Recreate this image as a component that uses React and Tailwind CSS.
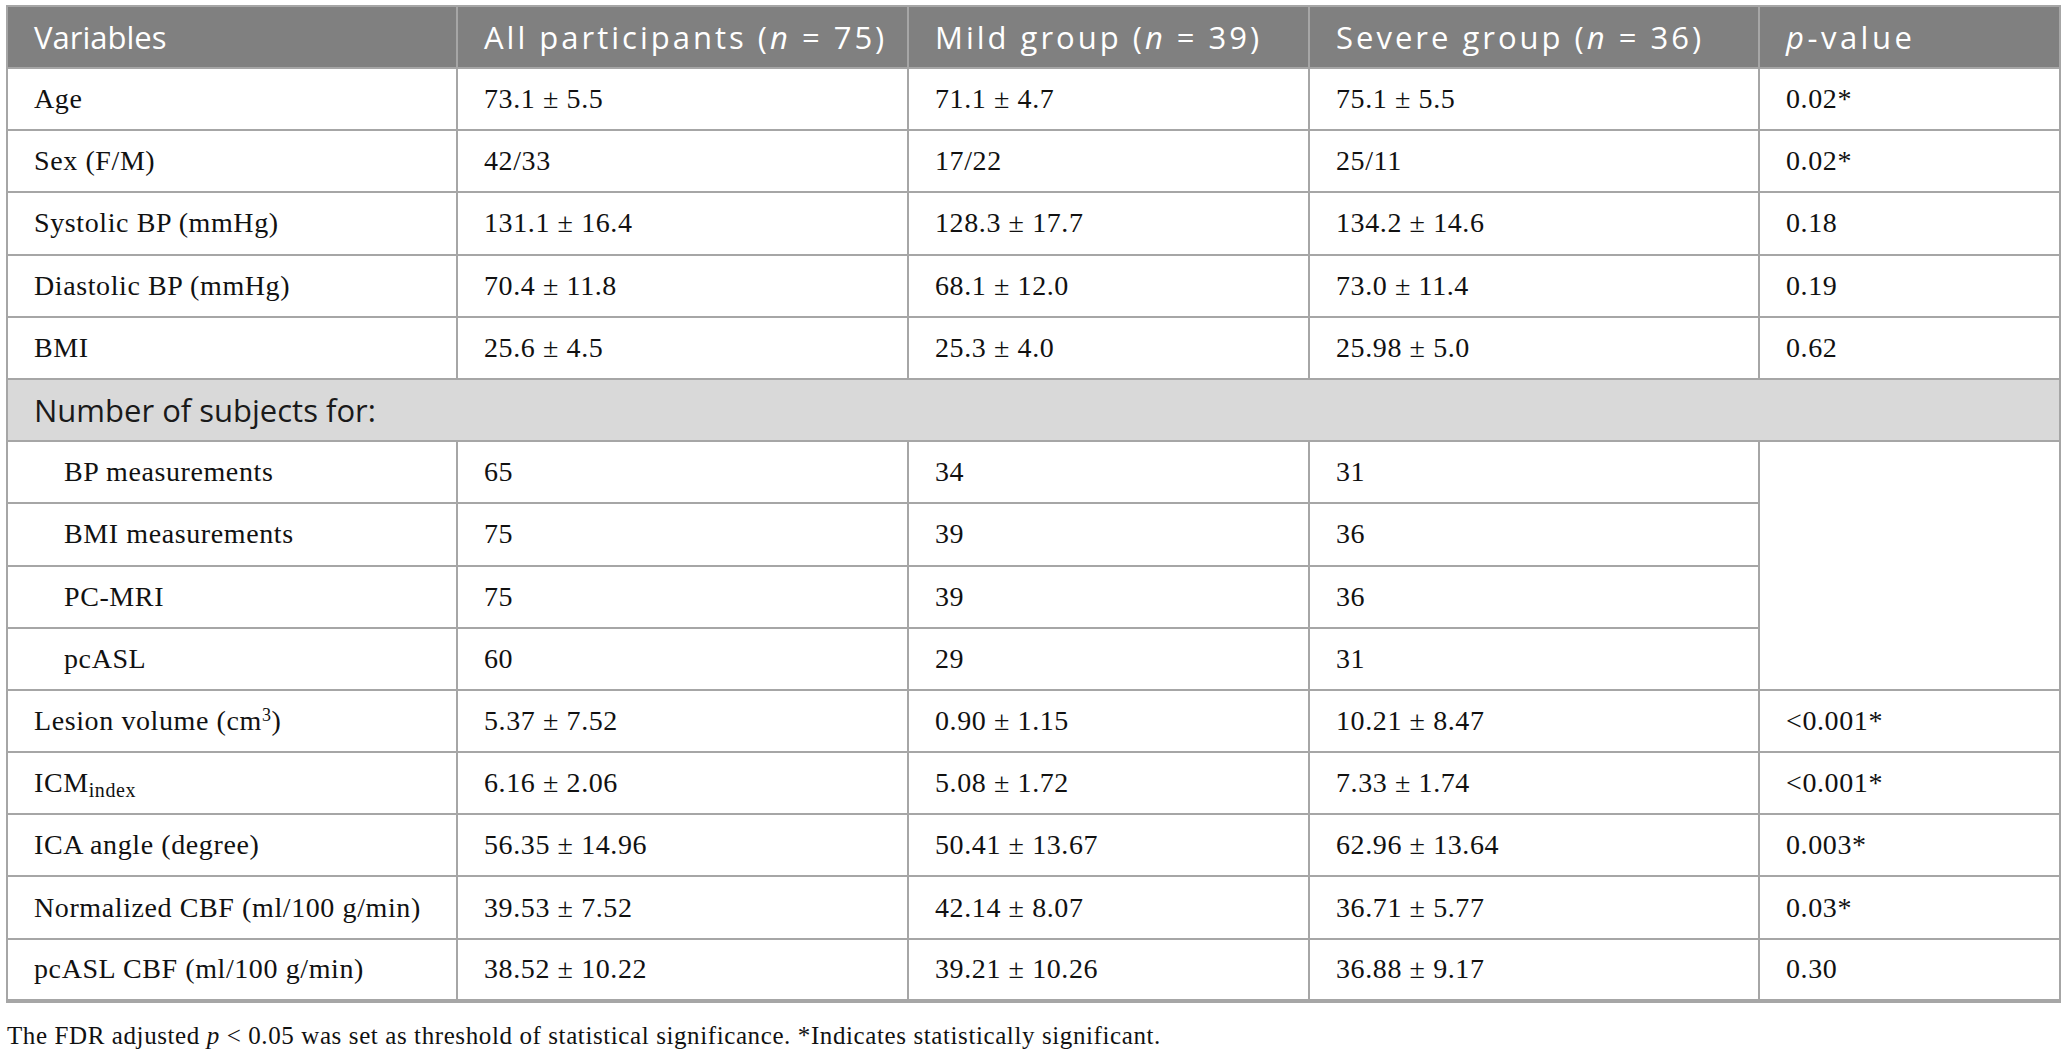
import React from 'react'

const rowsTop = [
  ['Age', '73.1 ± 5.5', '71.1 ± 4.7', '75.1 ± 5.5', '0.02*'],
  ['Sex (F/M)', '42/33', '17/22', '25/11', '0.02*'],
  ['Systolic BP (mmHg)', '131.1 ± 16.4', '128.3 ± 17.7', '134.2 ± 14.6', '0.18'],
  ['Diastolic BP (mmHg)', '70.4 ± 11.8', '68.1 ± 12.0', '73.0 ± 11.4', '0.19'],
  ['BMI', '25.6 ± 4.5', '25.3 ± 4.0', '25.98 ± 5.0', '0.62'],
]

const rowsSub = [
  ['BP measurements', '65', '34', '31'],
  ['BMI measurements', '75', '39', '36'],
  ['PC-MRI', '75', '39', '36'],
  ['pcASL', '60', '29', '31'],
]

const rowsBottom = [
  [<>Lesion volume (cm<sup className="text-[18px]">3</sup>)</>, '5.37 ± 7.52', '0.90 ± 1.15', '10.21 ± 8.47', '<0.001*'],
  [<>ICM<sub className="text-[20px]">index</sub></>, '6.16 ± 2.06', '5.08 ± 1.72', '7.33 ± 1.74', '<0.001*'],
  ['ICA angle (degree)', '56.35 ± 14.96', '50.41 ± 13.67', '62.96 ± 13.64', '0.003*'],
  ['Normalized CBF (ml/100 g/min)', '39.53 ± 7.52', '42.14 ± 8.07', '36.71 ± 5.77', '0.03*'],
  ['pcASL CBF (ml/100 g/min)', '38.52 ± 10.22', '39.21 ± 10.26', '36.88 ± 9.17', '0.30'],
]

const td = 'border-2 border-[#a6a6a6] pl-[26px] align-middle'
const th = 'border-2 border-[#a6a6a6] pl-[26px] align-middle font-normal text-left'

function Row({ cells }) {
  return (
    <tr className="h-[62.2px]">
      {cells.map((c, i) => (
        <td key={i} className={td}>{c}</td>
      ))}
    </tr>
  )
}

export default function App() {
  return (
    <div className="bg-white min-h-screen w-[2068px] h-[1056px] overflow-hidden text-[#111]">
      <table className="table-fixed border-collapse ml-[6px] mt-[5px] w-[2055px] font-['Liberation_Serif',serif] text-[28px] tracking-[0.6px] border-2 border-b-4 border-[#a6a6a6]">
        <colgroup>
          <col className="w-[450px]" />
          <col className="w-[451px]" />
          <col className="w-[401px]" />
          <col className="w-[450px]" />
          <col />
        </colgroup>
        <thead>
          <tr className="h-[62px] bg-[#808080] text-white font-['Open_Sans',sans-serif] text-[31px] tracking-normal">
            <th className={th}>Variables</th>
            <th className={`${th} tracking-[3px]`}>All participants (<i>n</i> = 75)</th>
            <th className={`${th} tracking-[3px]`}>Mild group (<i>n</i> = 39)</th>
            <th className={`${th} tracking-[3px]`}>Severe group (<i>n</i> = 36)</th>
            <th className={`${th} tracking-[3.5px]`}><i>p</i>-value</th>
          </tr>
        </thead>
        <tbody>
          {rowsTop.map((r, i) => <Row key={i} cells={r} />)}
          <tr className="h-[62.2px] bg-[#d9d9d9]">
            <td colSpan={5} className={`${td} font-['Open_Sans',sans-serif] text-[31px] tracking-normal text-[#1a1a1a]`}>
              Number of subjects for:
            </td>
          </tr>
          {rowsSub.map((r, i) => (
            <tr key={i} className="h-[62.2px]">
              <td className="border-2 border-[#a6a6a6] pl-[56px] align-middle">{r[0]}</td>
              <td className={td}>{r[1]}</td>
              <td className={td}>{r[2]}</td>
              <td className={td}>{r[3]}</td>
              {i === 0 && <td rowSpan={4} className={td}></td>}
            </tr>
          ))}
          {rowsBottom.map((r, i) => <Row key={i} cells={r} />)}
        </tbody>
      </table>
      <p className="ml-[7px] mt-[18px] font-['Liberation_Serif',serif] text-[25px] tracking-[0.6px] leading-[30px] text-[#111]">
        The FDR adjusted <i>p</i> &lt; 0.05 was set as threshold of statistical significance. *Indicates statistically significant.
      </p>
    </div>
  )
}
